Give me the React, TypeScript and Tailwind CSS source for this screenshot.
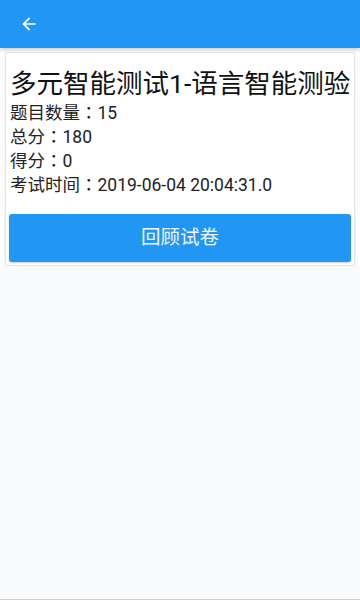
import React from "react";

const C = () => <span style={{ fontFamily: '"Noto Sans CJK TC", sans-serif' }}>：</span>;

export default function App() {
  const font = { fontFamily: '"Roboto", "Noto Sans CJK SC", sans-serif' };
  const line = "h-[24px] leading-[24px] overflow-visible";
  return (
    <div className="w-[360px] h-[600px] bg-[#f9fafc] flex flex-col overflow-hidden" style={font}>
      <div className="h-[48px] bg-[#2196f3] flex items-center pl-[19px] shadow-[0_2px_4px_rgba(0,0,0,0.2)] relative z-10 shrink-0">
        <svg width="20" height="20" viewBox="0 0 24 24" fill="white">
          <path d="M20 11H7.83l5.59-5.59L12 4l-8 8 8 8 1.41-1.41L7.83 13H20v-2z" />
        </svg>
      </div>
      <div className="px-[5px] pt-[4px] bg-white">
        <div className="bg-white border border-[#e6e6e6] rounded-[3px] shadow-[0_1px_3px_rgba(0,0,0,0.12)] px-[3px] pb-[3px]">
          <div className="px-[1px] pt-[14px]">
            <div className="h-[34px] text-[26.5px] leading-[34px] text-[#111] whitespace-nowrap">多元智能测试1-语言智能测验</div>
            <div className="text-[17.5px] text-[#222] mt-[-1px] whitespace-nowrap">
              <div className={line}>题目数量<C />15</div>
              <div className={line}>总分<C />180</div>
              <div className={line}>得分<C />0</div>
              <div className={line}>考试时间<C />2019-06-04 20:04:31.0</div>
            </div>
          </div>
          <button className="mt-[18px] w-full h-[48px] bg-[#2196f3] rounded-[3px] text-[19.5px] text-[#eef6fd] flex items-center justify-center shadow-[0_1px_2px_rgba(0,0,0,0.2)]">
            回顾试卷
          </button>
        </div>
      </div>
      <div className="flex-1 bg-[#f9fafc]" />
      <div className="h-[1px] bg-[#cfcfcf] shrink-0" />
    </div>
  );
}
